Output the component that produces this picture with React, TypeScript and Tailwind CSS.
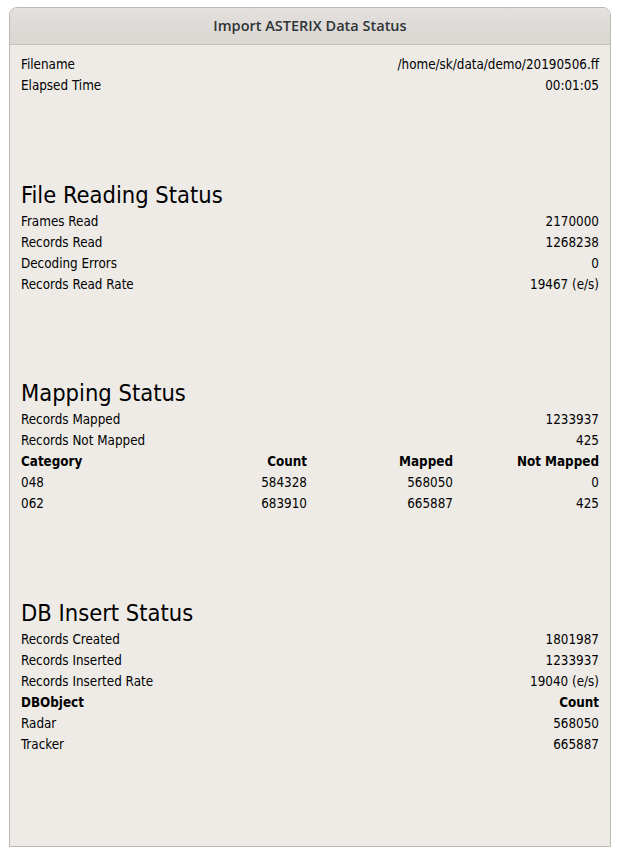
import React from "react";

const body = "font-['DejaVu_Sans',sans-serif] font-stretch-condensed";

function Row({ l, r, bold }: { l: string; r: string; bold?: boolean }) {
  return (
    <div className={`flex h-[21px] items-center justify-between ${bold ? "font-bold" : ""}`}>
      <span>{l}</span>
      <span>{r}</span>
    </div>
  );
}

function Heading({ children, mt }: { children: React.ReactNode; mt: string }) {
  return (
    <div className={`${mt} flex h-[30px] items-center text-[23.5px] leading-none`}>{children}</div>
  );
}

function Grid4({ cells, bold }: { cells: string[]; bold?: boolean }) {
  return (
    <div className={`grid h-[21px] grid-cols-4 items-center gap-x-[6px] ${bold ? "font-bold" : ""}`}>
      <span>{cells[0]}</span>
      <span className="text-right">{cells[1]}</span>
      <span className="text-right">{cells[2]}</span>
      <span className="text-right">{cells[3]}</span>
    </div>
  );
}

export default function App() {
  return (
    <div className="h-[855px] w-[620px] bg-white pl-[9px] pt-[7px]">
      <div className="flex h-[840px] w-[602px] flex-col overflow-hidden rounded-t-[8px] border border-[#bdb8b2]">
        <div className="flex h-[37px] shrink-0 items-center justify-center border-b border-[#c4c0bb] bg-gradient-to-b from-[#e3e0dd] to-[#dad6d2] font-['Open_Sans',sans-serif] text-[14.5px] font-semibold text-[#2e3436]">
          Import ASTERIX Data Status
        </div>
        <div className={`flex-1 bg-[#eeebe7] pl-[11px] pr-[11px] pt-[9px] text-[13.33px] leading-none text-black ${body}`}>
          <Row l="Filename" r="/home/sk/data/demo/20190506.ff" />
          <Row l="Elapsed Time" r="00:01:05" />

          <Heading mt="mt-[85px]">File Reading Status</Heading>
          <Row l="Frames Read" r="2170000" />
          <Row l="Records Read" r="1268238" />
          <Row l="Decoding Errors" r="0" />
          <Row l="Records Read Rate" r="19467 (e/s)" />

          <Heading mt="mt-[84px]">Mapping Status</Heading>
          <Row l="Records Mapped" r="1233937" />
          <Row l="Records Not Mapped" r="425" />
          <Grid4 cells={["Category", "Count", "Mapped", "Not Mapped"]} bold />
          <Grid4 cells={["048", "584328", "568050", "0"]} />
          <Grid4 cells={["062", "683910", "665887", "425"]} />

          <Heading mt="mt-[85px]">DB Insert Status</Heading>
          <Row l="Records Created" r="1801987" />
          <Row l="Records Inserted" r="1233937" />
          <Row l="Records Inserted Rate" r="19040 (e/s)" />
          <Row l="DBObject" r="Count" bold />
          <Row l="Radar" r="568050" />
          <Row l="Tracker" r="665887" />
        </div>
      </div>
    </div>
  );
}
